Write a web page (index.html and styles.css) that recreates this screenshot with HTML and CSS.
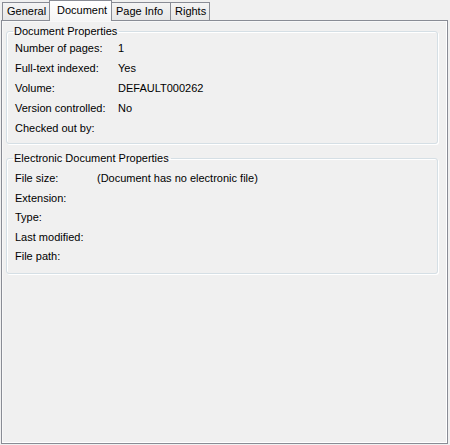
FILE: index.html
```html
<!DOCTYPE html>
<html>
<head>
<meta charset="utf-8">
<link rel="stylesheet" href="styles.css">
</head>
<body>
<div class="dialog">
  <div class="tabs">
    <div class="tab tab-general">General</div>
    <div class="tab tab-active tab-document">Document</div>
    <div class="tab tab-pageinfo">Page Info</div>
    <div class="tab tab-rights">Rights</div>
  </div>
  <div class="panel">
    <fieldset class="group group-doc">
      <legend class="group-title">Document Properties</legend>
      <div class="rows rows-doc">
        <span class="label">Number of pages:</span><span class="value">1</span>
        <span class="label">Full-text indexed:</span><span class="value">Yes</span>
        <span class="label">Volume:</span><span class="value">DEFAULT000262</span>
        <span class="label">Version controlled:</span><span class="value">No</span>
        <span class="label">Checked out by:</span><span class="value"></span>
      </div>
    </fieldset>
    <fieldset class="group group-elec">
      <legend class="group-title">Electronic Document Properties</legend>
      <div class="rows rows-elec">
        <span class="label">File size:</span><span class="value">(Document has no electronic file)</span>
        <span class="label">Extension:</span><span class="value"></span>
        <span class="label">Type:</span><span class="value"></span>
        <span class="label">Last modified:</span><span class="value"></span>
        <span class="label">File path:</span><span class="value"></span>
      </div>
    </fieldset>
  </div>
</div>
</body>
</html>
```
FILE: styles.css
```css
html, body {
  margin: 0;
  padding: 0;
  background: #f0f0f0;
}
body {
  font-family: "Liberation Sans", Arial, sans-serif;
  font-size: 11px;
  color: #000;
  width: 450px;
  height: 445px;
  overflow: hidden;
}
.dialog {
  display: flex;
  flex-direction: column;
  height: 445px;
}
.tabs {
  display: flex;
  align-items: flex-end;
  height: 20px;
  padding-left: 2px;
  position: relative;
  z-index: 2;
}
.tab {
  flex: 0 0 auto;
  box-sizing: border-box;
  white-space: nowrap;
  height: 18px;
  line-height: 17px;
  border: 1px solid #898c95;
  border-bottom: none;
  background: linear-gradient(#f4f4f4, #e6e6e6);
  padding-left: 4px;
}
.tab-general { width: 49px; }
.tab-pageinfo { width: 60px; margin-left: -1px; }
.tab-rights { width: 40px; margin-left: -1px; }
.tab-active {
  width: 63px;
  margin-left: -2px;
  padding-left: 7px;
  height: 21px;
  line-height: 19px;
  margin-bottom: -1px;
  position: relative;
  z-index: 3;
  background: linear-gradient(#ffffff, #f5f5f5);
}
.panel {
  flex: 1;
  margin: 0 2px 1px 1px;
  border: 1px solid #898c95;
  box-shadow: inset -1px -1px 0 #ffffff, inset 1px 1px 0 #f8f8f8;
  padding: 4px 9px 0 4px;
  display: flex;
  flex-direction: column;
}
.group {
  margin: 0;
  padding: 0 8px 5px 8px;
  border: 1px solid #d5dfe5;
  border-radius: 3px;
  box-shadow: inset 1px 1px 0 #ffffff, 1px 1px 0 #ffffff;
  min-width: 0;
}
.group-elec {
  margin-top: 8px;
  padding-top: 4px;
  padding-bottom: 6px;
}
.group-title {
  padding: 0 2px 0 1px;
  margin-left: -2px;
  line-height: 13px;
  height: 13px;
}
.rows {
  display: grid;
  line-height: 20px;
}
.rows-doc {
  grid-template-columns: 103px 1fr;
}
.rows-elec {
  grid-template-columns: 82px 1fr;
  line-height: 19.5px;
}
.label, .value {
  white-space: nowrap;
}
```
